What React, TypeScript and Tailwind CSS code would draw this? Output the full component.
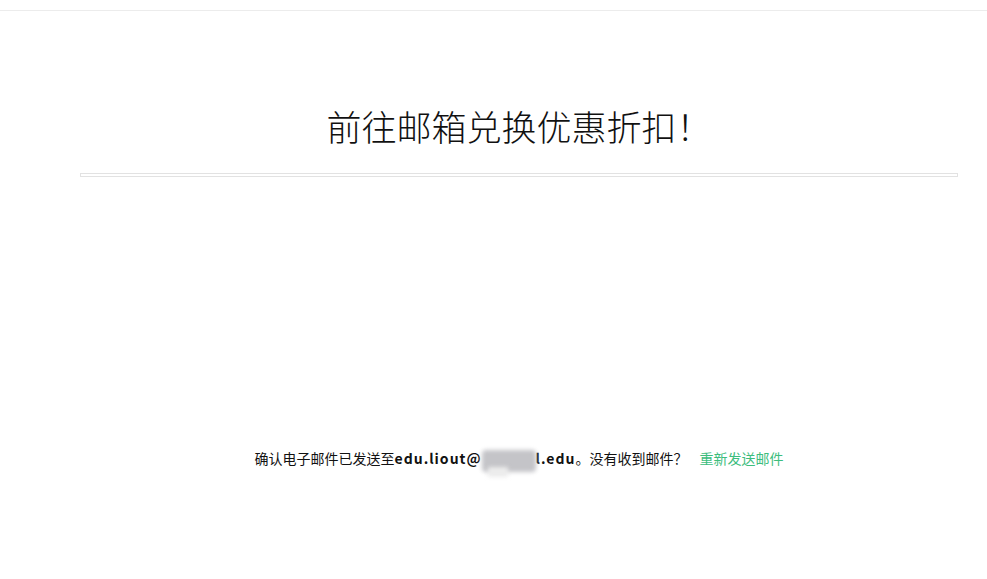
export default function App() {
  return (
    <main
      className="min-h-screen bg-white text-[#222]"
      style={{ fontFamily: '"Microsoft YaHei", "Noto Sans CJK SC", "Noto Sans", sans-serif' }}
    >
      {/* header strip */}
      <div className="h-[11px] border-b border-[#ececec]"></div>

      <section className="ml-[80px] w-[878px]">
        <h1 className="pt-[88px] text-center text-[35px] font-light leading-[54px] text-[#111]">
          前往邮箱兑换优惠折扣！
        </h1>

        <div className="mt-[20px] h-[4px] border border-[#e2e2e2]"></div>

        <p className="mt-[271px] text-center text-[14px] leading-[20px] text-[#111]">
          确认电子邮件已发送至
          <span className="font-bold tracking-[1px]">edu.liout@</span>
          <span className="relative inline-block h-[14px] w-[54px] align-middle">
            <span className="absolute left-0 top-[-3px] h-[22px] w-[54px] rounded-sm bg-[#c4c4c8] blur-[2px]"></span>
            <span className="absolute left-[6px] top-[14px] h-[10px] w-[20px] bg-[#ececec] blur-[2px]"></span>
          </span>
          <span className="font-bold tracking-[1px]">l.edu</span>
          。没有收到邮件？
          <a href="#" className="ml-[12px] text-[#3dbd7d]">
            重新发送邮件
          </a>
        </p>
      </section>
    </main>
  );
}
